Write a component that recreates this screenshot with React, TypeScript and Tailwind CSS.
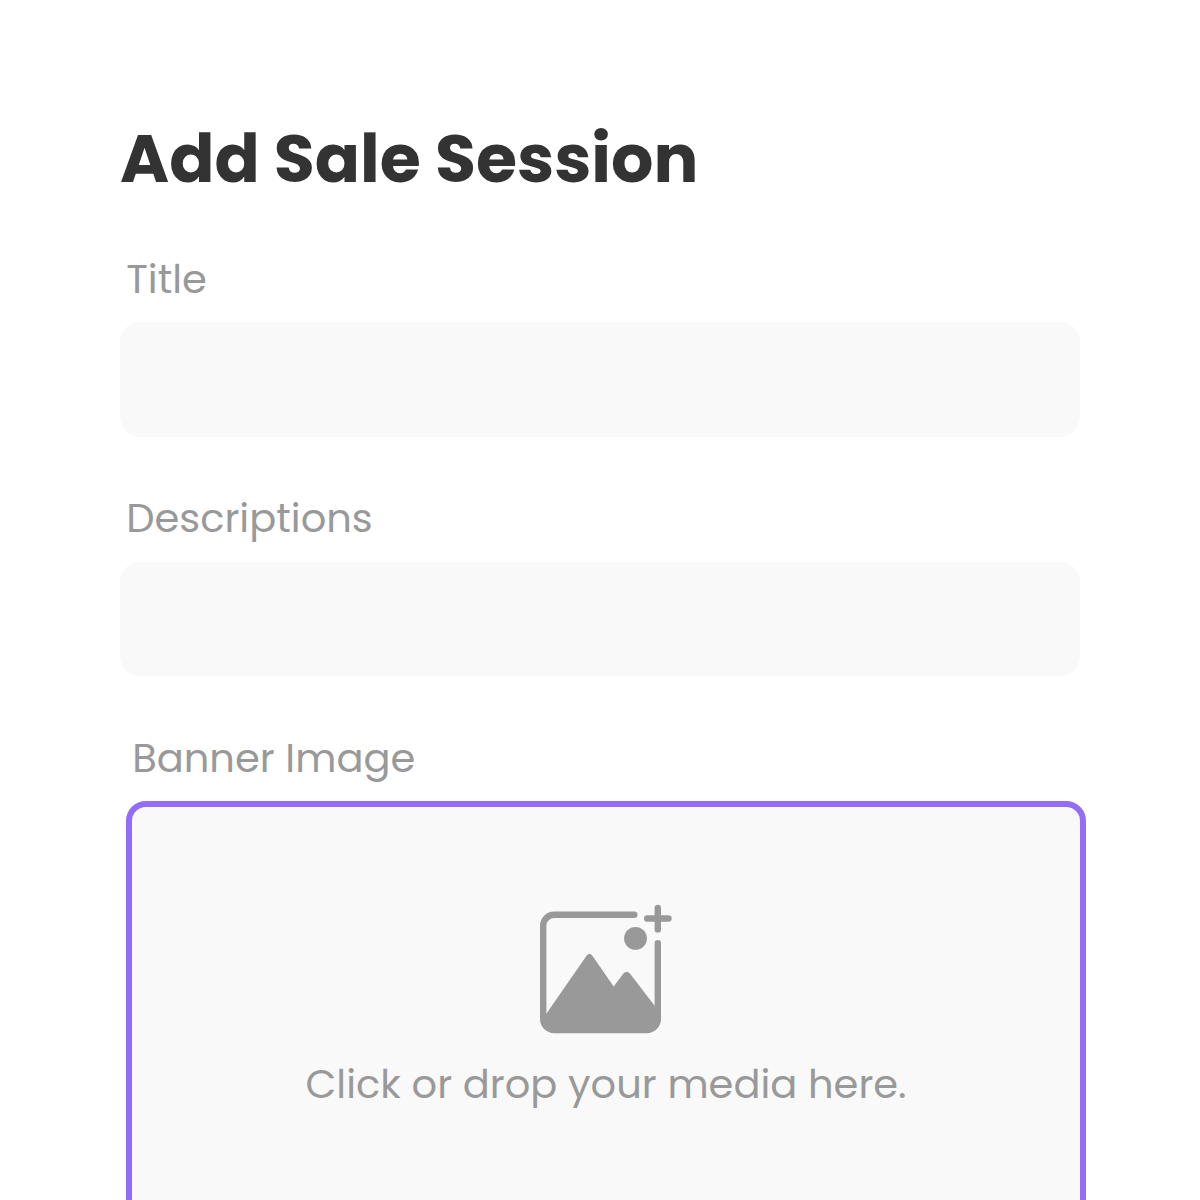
import type { ReactNode } from "react";

function MediaAddIcon() {
  return (
    <svg
      className="block h-[134px] w-[134px] text-[#999999]"
      viewBox="19 12 134 134"
      fill="none"
      stroke="currentColor"
      strokeWidth="6.4"
      strokeLinecap="round"
      aria-hidden="true"
    >
      <path d="M114.3 24.7H34.2a11 11 0 0 0-11 11V129a11 11 0 0 0 11 11H126.8a11 11 0 0 0 11-11V53.2" />
      <path d="M137.8 17.9V39.4M127.2 28.5H148.5" />
      <circle cx="115.5" cy="48.4" r="11.4" fill="currentColor" stroke="none" />
      <path
        d="M26 124.2L66.7 65.5Q69.4 62 72.2 65.5L93.7 96.4L103.6 83.3Q106.7 80 109.7 83.3L136 117.5V130Q136 141 126 141H35Q25 141 25 130Z"
        fill="currentColor"
        stroke="none"
      />
    </svg>
  );
}

function Label({ children }: { children: ReactNode }) {
  return (
    <label className="block h-12 pl-[6.2px] text-[40px] leading-12 whitespace-nowrap text-[#999999]">
      {children}
    </label>
  );
}

export default function App() {
  return (
    <main className="h-[1200px] w-[1200px] overflow-hidden bg-white px-[120px] pt-[119px] font-[Poppins,Inter,sans-serif]">
      <h1 className="h-20 text-[66.67px] leading-20 font-bold whitespace-nowrap text-[#333333]">
        Add Sale Session
      </h1>
      <div className="mt-14">
        <Label>Title</Label>
        <div className="mt-[19px] h-[115px] rounded-[20px] bg-[#f9f9f9]" />
      </div>
      <div className="mt-[57px]">
        <Label>Descriptions</Label>
        <div className="mt-5 h-[114px] rounded-[20px] bg-[#f9f9f9]" />
      </div>
      <div className="mt-[58px] ml-[6px] w-[960px]">
        <Label>Banner Image</Label>
        <div className="mt-[19px] flex h-[480px] flex-col items-center rounded-[20px] border-6 border-[#936df8] bg-[#f9f9f9] pt-[95px]">
          <MediaAddIcon />
          <p className="mt-6 h-12 text-[40px] leading-12 whitespace-nowrap text-[#999999]">
            Click or drop your media here.
          </p>
        </div>
      </div>
    </main>
  );
}
